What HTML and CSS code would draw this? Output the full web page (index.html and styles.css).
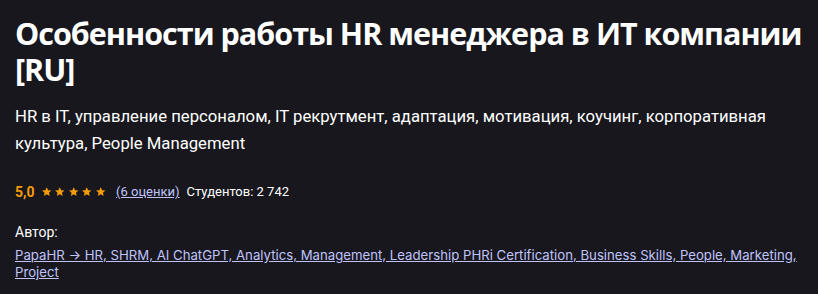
FILE: index.html
```html
<!DOCTYPE html>
<html lang="ru">
<head>
<meta charset="utf-8">
<link rel="stylesheet" href="styles.css">
</head>
<body>
<div class="header">
  <h1 class="title">Особенности работы HR менеджера в ИТ компании [RU]</h1>
  <div class="subtitle">HR в IT, управление персоналом, IT рекрутмент, адаптация, мотивация, коучинг, корпоративная культура, People Management</div>
  <div class="rating-row">
    <span class="score">5,0</span>
    <span class="stars">
      <svg viewBox="0 0 24 24"><path d="M12 2.5l2.9 6.3 6.9.7-5.2 4.6 1.5 6.8L12 17.4l-6.1 3.5 1.5-6.8-5.2-4.6 6.9-.7z"/></svg>
      <svg viewBox="0 0 24 24"><path d="M12 2.5l2.9 6.3 6.9.7-5.2 4.6 1.5 6.8L12 17.4l-6.1 3.5 1.5-6.8-5.2-4.6 6.9-.7z"/></svg>
      <svg viewBox="0 0 24 24"><path d="M12 2.5l2.9 6.3 6.9.7-5.2 4.6 1.5 6.8L12 17.4l-6.1 3.5 1.5-6.8-5.2-4.6 6.9-.7z"/></svg>
      <svg viewBox="0 0 24 24"><path d="M12 2.5l2.9 6.3 6.9.7-5.2 4.6 1.5 6.8L12 17.4l-6.1 3.5 1.5-6.8-5.2-4.6 6.9-.7z"/></svg>
      <svg viewBox="0 0 24 24"><path d="M12 2.5l2.9 6.3 6.9.7-5.2 4.6 1.5 6.8L12 17.4l-6.1 3.5 1.5-6.8-5.2-4.6 6.9-.7z"/></svg>
    </span>
    <a class="link count" href="#">(6 оценки)</a>
    <span class="students">Студентов: 2 742</span>
  </div>
  <div class="author">
    <div class="author-label">Автор:</div>
    <a class="link authors" href="#">PapaHR → HR, SHRM, AI ChatGPT, Analytics, Management, Leadership PHRi Certification, Business Skills, People, Marketing, Project</a>
  </div>
</div>
</body>
</html>
```
FILE: styles.css
```css
html, body {
  margin: 0;
  padding: 0;
  background: #17171d;
  color: #ffffff;
}
.header {
  padding: 15px 6px 0 15px;
  display: flex;
  flex-direction: column;
  font-family: Roboto, "Liberation Sans", sans-serif;
}
.title {
  margin: 0;
  font-family: "Open Sans", "Noto Sans", sans-serif;
  font-weight: 700;
  font-size: 30.5px;
  line-height: 36px;
  letter-spacing: -1px;
}
.subtitle {
  margin-top: 16px;
  font-size: 16.7px;
  line-height: 27px;
  max-width: 780px;
}
.rating-row {
  margin-top: 25px;
  display: flex;
  align-items: center;
  gap: 7px;
  font-size: 13px;
  line-height: 20px;
}
.score {
  color: #f69c08;
  font-weight: 700;
  font-size: 14px;
}
.stars {
  display: flex;
  gap: 2px;
  margin-left: -1px;
  margin-right: 3px;
}
.stars svg {
  width: 11.5px;
  height: 11.5px;
  fill: #f69c08;
}
.link {
  color: #c0c4fc;
  text-decoration: underline;
}
.author {
  margin-top: 20px;
  font-family: Inter, "Liberation Sans", sans-serif;
  font-size: 13.2px;
}
.author-label {
  font-family: Roboto, "Liberation Sans", sans-serif;
  font-size: 14px;
  line-height: 20px;
  margin-bottom: 5px;
}
.authors {
  display: block;
  line-height: 17px;
  max-width: 790px;
}
```
